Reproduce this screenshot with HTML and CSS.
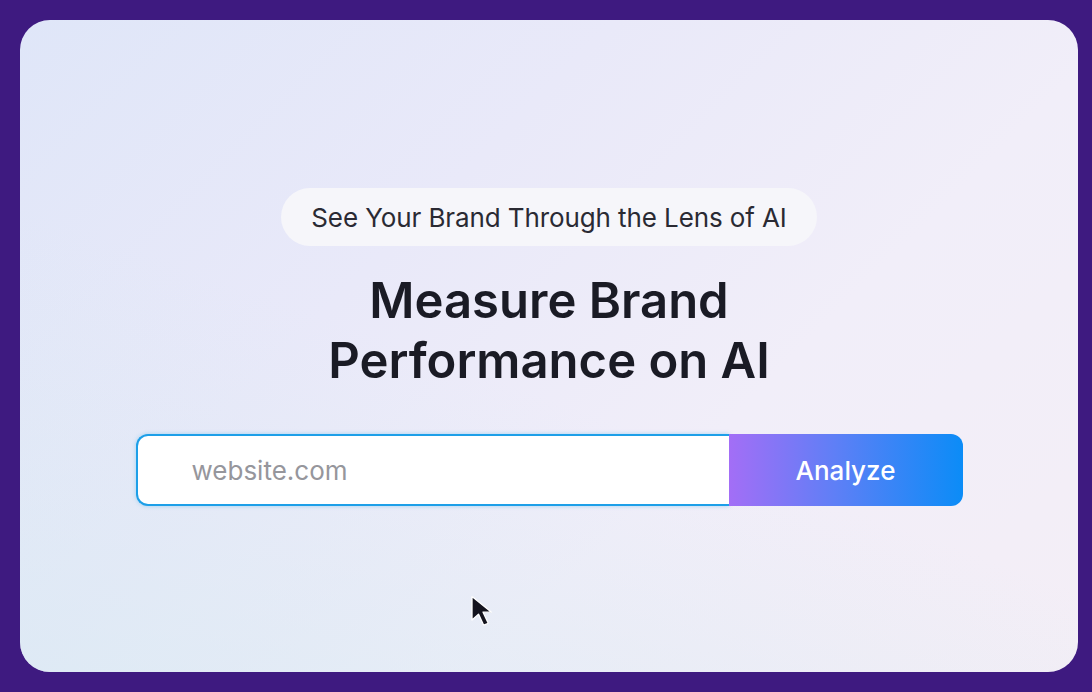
FILE: index.html
```html
<!DOCTYPE html>
<html>
<head>
<meta charset="utf-8">
<link rel="stylesheet" href="styles.css">
</head>
<body>
<div class="card">
  <div class="pill">See Your Brand Through the Lens of AI</div>
  <h1 class="title">Measure Brand<br>Performance on AI</h1>
  <form class="search">
    <div class="field"><span class="placeholder">website.com</span></div>
    <div class="btn">Analyze</div>
  </form>
  <svg class="cursor" width="34" height="39" viewBox="0 0 26 30">
    <path d="M3 2 L3 20 L8 15.5 L12 24 L15.5 22.5 L11.5 14 L18 14 Z" fill="#14141e" stroke="#ffffff" stroke-width="1" stroke-linejoin="round"/>
  </svg>
</div>
</body>
</html>
```
FILE: styles.css
```css
html, body {
  margin: 0;
  padding: 0;
}
body {
  background: #3e1a80;
  width: 1092px;
  height: 692px;
  padding: 20px 14px 20px 20px;
  box-sizing: border-box;
  font-family: Inter, "Noto Sans", sans-serif;
}
.card {
  position: relative;
  width: 1058px;
  height: 652px;
  border-radius: 30px;
  background:
    linear-gradient(135deg, #dfe6f8 0%, #e9e9f9 35%, #f1eef9 65%, #f4eef6 100%);
  display: flex;
  flex-direction: column;
  align-items: center;
  padding-top: 168px;
  box-sizing: border-box;
  overflow: hidden;
}
.card::before {
  content: "";
  position: absolute;
  inset: 0;
  background: linear-gradient(20deg, rgba(214,234,242,0.6) 0%, rgba(224,232,246,0) 45%);
  pointer-events: none;
}
.pill {
  position: relative;
  height: 58px;
  padding: 0 30px;
  border-radius: 29px;
  background: #f6f6fa;
  color: #2a2a33;
  font-size: 26px;
  display: flex;
  align-items: center;
  letter-spacing: -0.1px;
}
.title {
  position: relative;
  margin: 25px 0 0 0;
  text-align: center;
  font-size: 49px;
  line-height: 60px;
  font-weight: 600;
  color: #1a1b25;
}
.search {
  position: relative;
  margin: 43px 0 0 0;
  display: flex;
  width: 827px;
  height: 72px;
}
.field {
  flex: 1;
  background: #ffffff;
  border: 2.5px solid #1d9fe8;
  border-right: none;
  border-radius: 12px 0 0 12px;
  display: flex;
  align-items: center;
  padding-left: 54px;
  box-shadow: 0 0 4px rgba(30,160,232,0.35);
}
.placeholder {
  font-size: 26px;
  color: #96969c;
}
.btn {
  width: 234px;
  border-radius: 0 12px 12px 0;
  background: linear-gradient(90deg, #a36ef6 0%, #5f7ff6 45%, #0b8cf7 100%);
  color: #ffffff;
  font-size: 26px;
  font-weight: 500;
  display: flex;
  align-items: center;
  justify-content: center;
}
.cursor {
  position: absolute;
  left: 448px;
  top: 574px;
}
```
